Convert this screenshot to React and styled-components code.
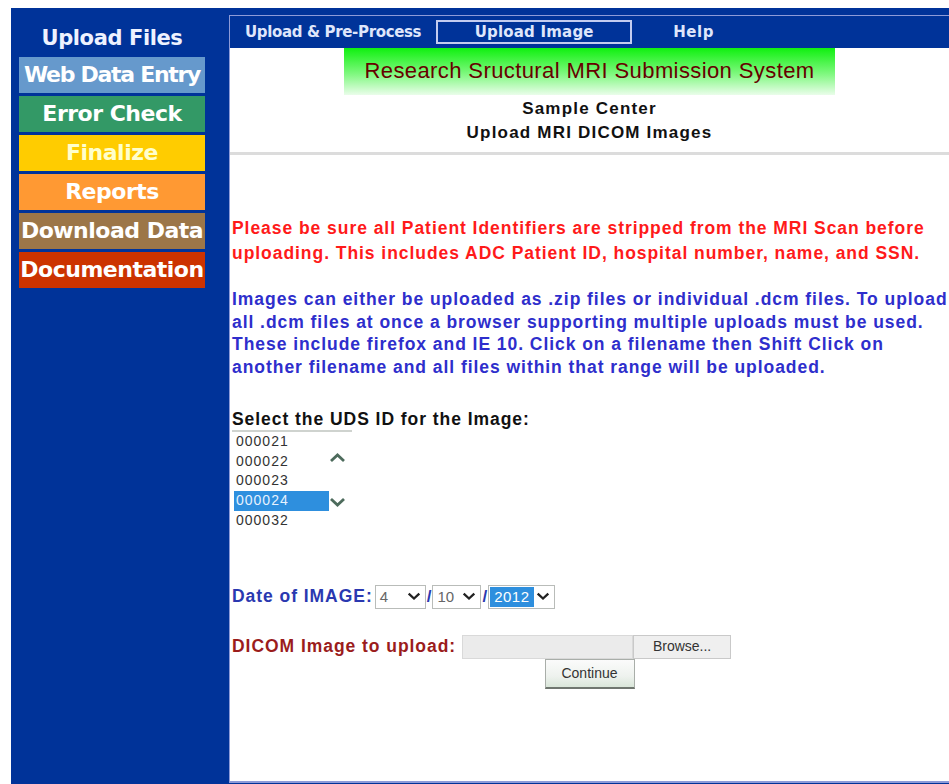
import React from "react";
import styled, { createGlobalStyle } from "styled-components";

const GlobalStyle = createGlobalStyle`
  html, body {
    margin: 0;
    padding: 0;
    background: #ffffff;
    overflow: hidden;
  }
  body {
    font-family: "Liberation Sans", Arial, sans-serif;
  }
`;

const menuItems = [
  { label: "Web Data Entry", bg: "#6699cc", fg: "#ffffff", ls: "-1.3px" },
  { label: "Error Check", bg: "#339966", fg: "#ffffff" },
  { label: "Finalize", bg: "#ffcc00", fg: "#ffffcc" },
  { label: "Reports", bg: "#ff9933", fg: "#ffffff" },
  { label: "Download Data", bg: "#9c7648", fg: "#ffffff" },
  { label: "Documentation", bg: "#cc3300", fg: "#ffffff" },
];

const udsIds = ["000021", "000022", "000023", "000024", "000032"];

const warningLines = [
  "Please be sure all Patient Identifiers are stripped from the MRI Scan before",
  "uploading. This includes ADC Patient ID, hospital number, name, and SSN.",
];

const infoLines = [
  "Images can either be uploaded as .zip files or individual .dcm files. To upload",
  "all .dcm files at once a browser supporting multiple uploads must be used.",
  "These include firefox and IE 10. Click on a filename then Shift Click on",
  "another filename and all files within that range will be uploaded.",
];

const ChevronUp = () => (
  <svg width="17" height="11" viewBox="0 0 17 11">
    <polyline points="2,9 8.5,3 15,9" fill="none" stroke="#4d6b5c" strokeWidth="2.8" />
  </svg>
);

const ChevronDown = ({ color = "#4d6b5c", w = 17, h = 11 }) => (
  <svg width={w} height={h} viewBox="0 0 17 11">
    <polyline points="2,2 8.5,8 15,2" fill="none" stroke={color} strokeWidth="2.8" />
  </svg>
);

const App = () => {
  return (
    <>
      <GlobalStyle />
      <Frame>
        <Sidebar>
          <SideTitle>Upload Files</SideTitle>
          {menuItems.map((item) => (
            <MenuItem key={item.label} $bg={item.bg} $fg={item.fg} $ls={item.ls}>
              {item.label}
            </MenuItem>
          ))}
        </Sidebar>

        <Main>
          <Nav>
            <NavLink>Upload &amp; Pre-Process</NavLink>
            <NavTab>Upload Image</NavTab>
            <NavLink $help>Help</NavLink>
          </Nav>

          <Content>
            <Banner>Research Sructural MRI Submission System</Banner>
            <Heading>
              Sample Center
              <br />
              Upload MRI DICOM Images
            </Heading>
            <Divider />

            <Body>
              <Notice $color="#ff1a1a" $lh="25px" $top="61px">
                {warningLines.map((line) => (
                  <span key={line}>
                    {line}
                    <br />
                  </span>
                ))}
              </Notice>
              <Notice $color="#2e2ecc" $lh="22.7px" $top="22px">
                {infoLines.map((line) => (
                  <span key={line}>
                    {line}
                    <br />
                  </span>
                ))}
              </Notice>

              <FieldLabel>Select the UDS ID for the Image:</FieldLabel>
              <ListBox>
                <Options>
                  {udsIds.map((id) => (
                    <Option key={id} $selected={id === "000024"}>
                      {id}
                    </Option>
                  ))}
                </Options>
                <Scroller>
                  <ChevronUp />
                  <ChevronDown />
                </Scroller>
              </ListBox>

              <DateRow>
                <InlineLabel $color="#2a38b0">Date of IMAGE:</InlineLabel>
                <Select $w="51px">
                  <span>4</span>
                  <ChevronDown color="#222" w={14} h={9} />
                </Select>
                <Slash>/</Slash>
                <Select $w="49px">
                  <span>10</span>
                  <ChevronDown color="#222" w={14} h={9} />
                </Select>
                <Slash>/</Slash>
                <Select $w="67px" $pad="1px">
                  <Highlight>2012</Highlight>
                  <ChevronDown color="#222" w={14} h={9} />
                </Select>
              </DateRow>

              <UploadRow>
                <InlineLabel $color="#9b1c1c">DICOM Image to upload:</InlineLabel>
                <FileBox />
                <BrowseButton>Browse...</BrowseButton>
              </UploadRow>
              <ContinueWrap>
                <ContinueButton>Continue</ContinueButton>
              </ContinueWrap>
            </Body>
          </Content>
        </Main>
      </Frame>
    </>
  );
};

const Frame = styled.div`
  display: flex;
  margin: 8px 0 0 11px;
  height: 776px;
  background: #003399;
`;

const Sidebar = styled.div`
  width: 217px;
  flex-shrink: 0;
  padding: 16px 0 0 8px;
  box-sizing: border-box;
  display: flex;
  flex-direction: column;
`;

const SideTitle = styled.div`
  width: 186px;
  height: 28px;
  line-height: 28px;
  margin-bottom: 5px;
  text-align: center;
  color: #eef2ff;
  font-family: "DejaVu Sans", sans-serif;
  font-weight: bold;
  font-size: 21px;
  letter-spacing: -0.4px;
`;

const MenuItem = styled.div`
  width: 186px;
  height: 36px;
  line-height: 36px;
  margin-bottom: 3px;
  text-align: center;
  background: ${(p) => p.$bg};
  color: ${(p) => p.$fg};
  font-family: "DejaVu Sans", sans-serif;
  font-weight: bold;
  font-size: 22px;
  letter-spacing: ${(p) => p.$ls || "-0.5px"};
  white-space: nowrap;
  overflow: hidden;
`;

const Main = styled.div`
  flex: 1;
  margin: 7px 0 1px 1px;
  border-top: 1px solid #8d9bd8;
  border-left: 1px solid #8d9bd8;
  border-bottom: 2px solid #8d9bd8;
  display: flex;
  flex-direction: column;
  min-width: 0;
`;

const Nav = styled.div`
  height: 32px;
  flex-shrink: 0;
  display: flex;
  align-items: center;
  padding-left: 14px;
  background: #003399;
  border-left: 1px solid #003399;
  font-family: "DejaVu Sans", sans-serif;
  font-weight: bold;
  font-size: 15px;
  color: #dfe6fb;
  white-space: nowrap;
`;

const NavLink = styled.div`
  margin-left: ${(p) => (p.$help ? "41px" : "0")};
  letter-spacing: ${(p) => (p.$help ? "0.6px" : "-0.35px")};
`;

const NavTab = styled.div`
  width: 196px;
  height: 24px;
  box-sizing: border-box;
  margin-left: 15px;
  border: 2px solid #c3ccf0;
  text-align: center;
  line-height: 20px;
  letter-spacing: 0.2px;
`;

const Content = styled.div`
  flex: 1;
  background: #ffffff;
  display: flex;
  flex-direction: column;
`;

const Banner = styled.div`
  align-self: center;
  width: 491px;
  height: 47px;
  line-height: 45px;
  text-align: center;
  background: linear-gradient(to bottom, #10f010 0%, #7ff87f 55%, #eafdea 100%);
  color: #660000;
  font-size: 22px;
  letter-spacing: 0.4px;
`;

const Heading = styled.div`
  padding-top: 2px;
  text-align: center;
  font-weight: bold;
  font-size: 17px;
  letter-spacing: 1.2px;
  line-height: 24px;
  color: #111111;
`;

const Divider = styled.div`
  height: 3px;
  margin-top: 7px;
  background: #dcdcdc;
`;

const Body = styled.div`
  padding-left: 2px;
  display: flex;
  flex-direction: column;
  align-items: flex-start;
`;

const Notice = styled.p`
  margin: ${(p) => p.$top} 0 0;
  color: ${(p) => p.$color};
  line-height: ${(p) => p.$lh};
  font-size: 17.5px;
  font-weight: bold;
  letter-spacing: 0.95px;
  white-space: nowrap;
`;

const FieldLabel = styled.div`
  margin-top: 29px;
  line-height: 22px;
  font-size: 17.5px;
  font-weight: bold;
  letter-spacing: 0.95px;
  color: #111111;
`;

const ListBox = styled.div`
  width: 120px;
  display: flex;
  border-top: 2px solid #cfd3cf;
`;

const Options = styled.div`
  width: 95px;
  padding-left: 2px;
`;

const Option = styled.div`
  height: 19.75px;
  line-height: 19.75px;
  padding-left: 2px;
  font-size: 14px;
  letter-spacing: 1px;
  color: ${(p) => (p.$selected ? "#e6f2ff" : "#333333")};
  background: ${(p) => (p.$selected ? "#2e8fde" : "transparent")};
`;

const Scroller = styled.div`
  display: flex;
  flex-direction: column;
  align-items: center;
  padding: 20px 0 0 0;
  gap: 34px;
`;

const DateRow = styled.div`
  margin-top: 54px;
  height: 24px;
  display: flex;
  align-items: center;
`;

const InlineLabel = styled.span`
  color: ${(p) => p.$color};
  font-size: 17.5px;
  font-weight: bold;
  letter-spacing: 0.95px;
  margin-right: 2px;
  white-space: nowrap;
`;

const Select = styled.div`
  width: ${(p) => p.$w};
  height: 24px;
  box-sizing: border-box;
  display: flex;
  align-items: center;
  justify-content: space-between;
  padding: 0 4px 0 ${(p) => p.$pad || "4px"};
  border: 1px solid #b9bcb9;
  background: #ffffff;
  font-size: 15px;
  color: #666666;
`;

const Highlight = styled.span`
  height: 20px;
  line-height: 20px;
  padding: 0 4px;
  background: #2e8fde;
  color: #ffffff;
  letter-spacing: 0.5px;
`;

const Slash = styled.span`
  color: #2a38b0;
  font-size: 17px;
  font-weight: bold;
  padding: 0 1px;
`;

const UploadRow = styled.div`
  margin-top: 26px;
  height: 24px;
  display: flex;
  align-items: center;
`;

const FileBox = styled.div`
  width: 171px;
  height: 24px;
  box-sizing: border-box;
  margin-left: 4px;
  background: #ebebeb;
  border: 1px solid #d9d9d9;
`;

const BrowseButton = styled.div`
  width: 98px;
  height: 24px;
  box-sizing: border-box;
  line-height: 20px;
  text-align: center;
  background: #efefef;
  border: 1px solid #c9c9c9;
  font-size: 14px;
  color: #333333;
`;

const ContinueWrap = styled.div`
  align-self: stretch;
  display: flex;
  justify-content: center;
  padding-right: 2px;
`;

const ContinueButton = styled.div`
  width: 90px;
  height: 30px;
  box-sizing: border-box;
  line-height: 27px;
  text-align: center;
  background: linear-gradient(to bottom, #fbfbfb 0%, #eef2ee 60%, #d9e6d9 100%);
  border: 1px solid #a9aea9;
  border-bottom: 2px solid #6f766f;
  font-size: 14px;
  color: #333333;
`;

export default App;
